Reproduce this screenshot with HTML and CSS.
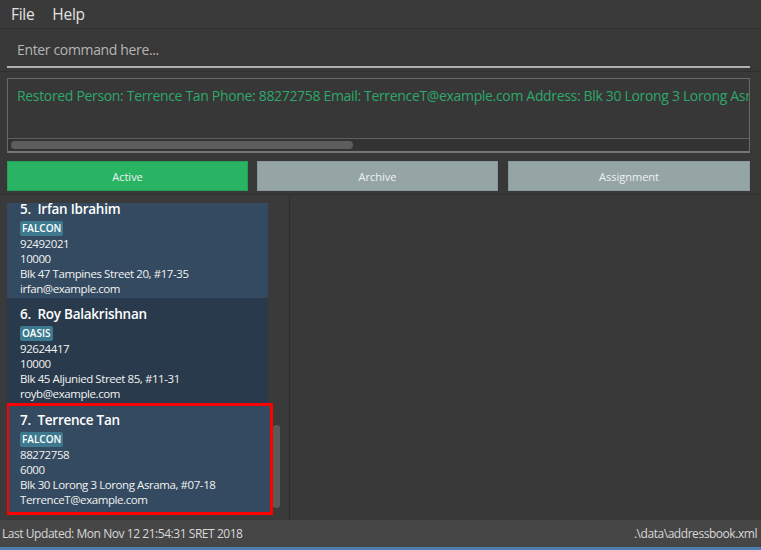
FILE: index.html
```html
<!DOCTYPE html>
<html>
<head>
<meta charset="utf-8">
<link rel="stylesheet" href="styles.css">
</head>
<body>
<div class="app">
  <div class="menubar">
    <span class="menu">File</span>
    <span class="menu">Help</span>
  </div>
  <div class="command">
    <div class="command-field">Enter command here...</div>
  </div>
  <div class="result-wrap">
    <div class="result">
      <div class="result-text">Restored Person: Terrence Tan Phone: 88272758 Email: TerrenceT@example.com Address: Blk 30 Lorong 3 Lorong Asrama, #07-18 Tags: [FALCON]</div>
      <div class="hscroll"><div class="hthumb"></div></div>
    </div>
  </div>
  <div class="tabs">
    <div class="tab tab-active">Active</div>
    <div class="tab">Archive</div>
    <div class="tab">Assignment</div>
  </div>
  <div class="main">
    <div class="list-pane">
      <div class="list">
        <div class="list-inner">
          <div class="card card-light card-first">
            <div class="name">5.&nbsp; Irfan Ibrahim</div>
            <div class="tags"><span class="tag">FALCON</span></div>
            <div class="line">92492021</div>
            <div class="line">10000</div>
            <div class="line">Blk 47 Tampines Street 20, #17-35</div>
            <div class="line">irfan@example.com</div>
          </div>
          <div class="card card-dark">
            <div class="name">6.&nbsp; Roy Balakrishnan</div>
            <div class="tags"><span class="tag">OASIS</span></div>
            <div class="line">92624417</div>
            <div class="line">10000</div>
            <div class="line">Blk 45 Aljunied Street 85, #11-31</div>
            <div class="line">royb@example.com</div>
          </div>
          <div class="card card-light card-selected">
            <div class="name">7.&nbsp; Terrence Tan</div>
            <div class="tags"><span class="tag">FALCON</span></div>
            <div class="line">88272758</div>
            <div class="line">6000</div>
            <div class="line">Blk 30 Lorong 3 Lorong Asrama, #07-18</div>
            <div class="line">TerrenceT@example.com</div>
          </div>
        </div>
        <div class="vscroll"><div class="vthumb"></div></div>
      </div>
    </div>
    <div class="detail-pane"></div>
  </div>
  <div class="status">
    <span>Last Updated: Mon Nov 12 21:54:31 SRET 2018</span>
    <span>.\data\addressbook.xml</span>
  </div>
  <div class="bottom-line"></div>
</div>
</body>
</html>
```
FILE: styles.css
```css
* { box-sizing: border-box; }
html, body {
  margin: 0;
  padding: 0;
  background: #393939;
}
body {
  font-family: "Open Sans", "Noto Sans", sans-serif;
  width: 761px;
  height: 550px;
  overflow: hidden;
}
.app {
  display: flex;
  flex-direction: column;
  height: 550px;
}
.menubar {
  height: 29px;
  display: flex;
  align-items: center;
  gap: 18px;
  padding-left: 11px;
  background: #3a3a3a;
  border-bottom: 1px solid #2f2f2f;
  color: #e2e2e2;
  font-size: 15.5px;
  letter-spacing: -0.3px;
}
.command {
  height: 43px;
  padding: 4px 11px 0 7px;
  border-bottom: 1px solid #2f2f2f;
  background: #383838;
}
.command-field {
  height: 35px;
  border-bottom: 2px solid #b0b0b0;
  padding-left: 10px;
  display: flex;
  align-items: center;
  color: #b5b5b5;
  font-size: 14px;
  letter-spacing: -0.35px;
}
.result-wrap {
  padding: 6px 11px 0 7px;
  height: 83px;
  background: #383838;
}
.result {
  height: 75px;
  border: 1px solid #6a6a6a;
  border-bottom: 2px solid #777777;
  background: #373737;
  overflow: hidden;
}
.result-text {
  white-space: nowrap;
  overflow: hidden;
  color: #2ea86a;
  font-size: 14px;
  letter-spacing: -0.33px;
  padding: 7px 0 0 9px;
  height: 60px;
  border-bottom: 1px solid #5e5e5e;
}
.hscroll {
  height: 12px;
  padding: 2px 3px;
  background: #333333;
}
.hthumb {
  width: 342px;
  height: 8px;
  border-radius: 4px;
  background: #5d5d5d;
}
.tabs {
  display: flex;
  padding: 6px 0 0 7px;
  height: 40px;
  border-bottom: 1px solid #2f2f2f;
  background: #383838;
}
.tab {
  width: 241px;
  height: 30px;
  background: #95a5a6;
  border: 1px solid #8a9899;
  color: #eef2f2;
  font-size: 11px;
  display: flex;
  align-items: center;
  justify-content: center;
  margin-right: 9px;
}
.tab:last-child { width: 242px; margin-right: 0; }
.tab:nth-child(2) { margin-right: 10px; }
.tab-active {
  background: #28b463;
  border-color: #22a258;
}
.main {
  flex: 1;
  display: flex;
  background: #393939;
}
.list-pane {
  width: 290px;
  border-right: 1px solid #2e2e2e;
  padding: 8px 0 0 7px;
  background: #3a3a3a;
}
.list {
  height: 313px;
  overflow: hidden;
  display: flex;
  gap: 5px;
}
.list-inner {
  width: 261px;
  flex: none;
}
.card {
  padding: 6px 13px 0 13px;
  height: 105px;
  color: #ffffff;
}
.card-first { margin-top: -10px; }
.card-light { background: #344a60; }
.card-dark { background: #293a4c; }
.card-selected {
  border: 3px solid #ff0000;
  height: 112px;
  padding: 4px 10px 0 11px;
  margin-left: -1px;
  width: 267px;
}
.name {
  font-size: 13.5px;
  font-weight: 600;
  line-height: 20px;
  letter-spacing: -0.25px;
}
.tags {
  height: 17px;
  padding-top: 2px;
  line-height: 15px;
}
.tag {
  display: inline-block;
  vertical-align: top;
  background: #3d7a8f;
  color: #ffffff;
  font-size: 10px;
  font-weight: 600;
  line-height: 15px;
  padding: 0 2px;
  border-radius: 2px;
}
.line {
  font-size: 11.5px;
  line-height: 15px;
  letter-spacing: -0.42px;
  color: #f2f2f2;
}
.vscroll {
  width: 8px;
  flex: none;
}
.vthumb {
  margin-top: 222px;
  width: 7px;
  height: 83px;
  border-radius: 3px;
  background: #5a5a5a;
}
.detail-pane {
  flex: 1;
  background: #393939;
}
.status {
  height: 27px;
  background: #464646;
  display: flex;
  align-items: center;
  justify-content: space-between;
  padding: 0 4px 0 2px;
  color: #d8d8d8;
  font-size: 12px;
  letter-spacing: -0.45px;
}
.bottom-line {
  height: 3px;
  background: #4a7fb0;
}
```
